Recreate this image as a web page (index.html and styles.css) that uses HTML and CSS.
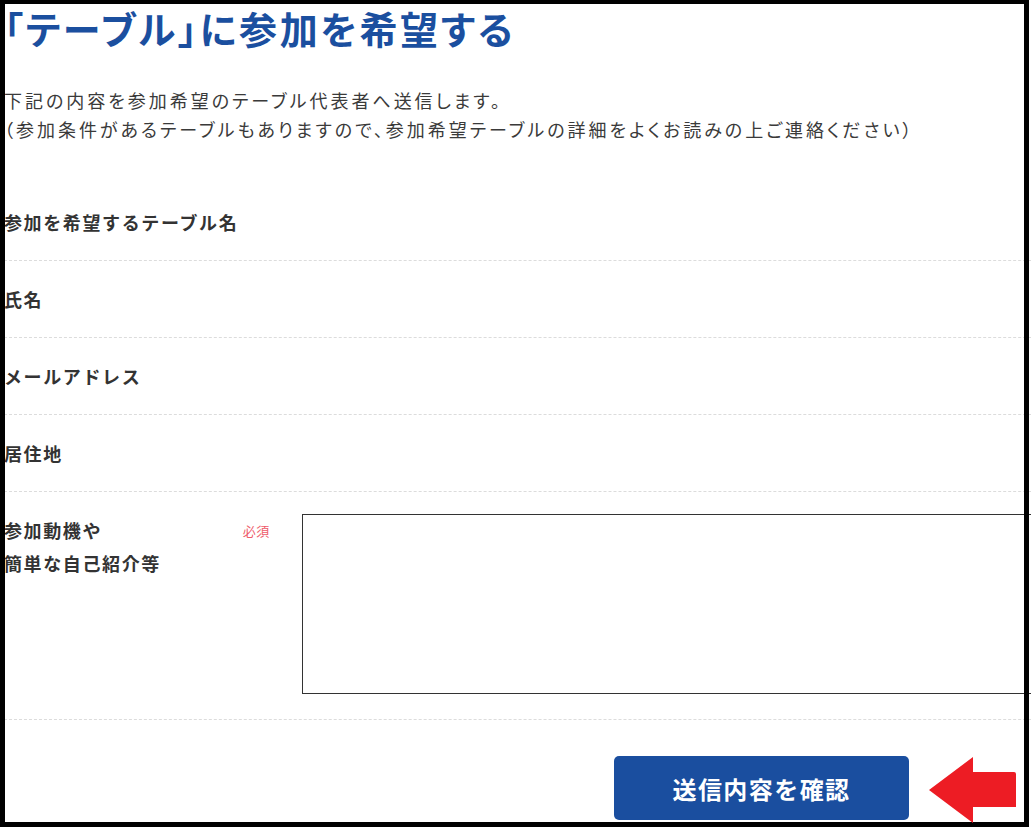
FILE: index.html
```html
<!DOCTYPE html>
<html lang="ja">
<head>
    <meta charset="UTF-8">
    <meta name="viewport" content="width=device-width, initial-scale=1.0">
    <title>テーブルに参加を希望する</title>
    <link rel="stylesheet" href="styles.css">
</head>
<body>

    <div class="page">
        <h1 class="page-title">「テーブル」に参加を希望する</h1>

        <p class="lead">
            下記の内容を参加希望のテーブル代表者へ送信します。<br>
            （参加条件があるテーブルもありますので、参加希望テーブルの詳細をよくお読みの上ご連絡ください）
        </p>

        <form class="entry-form" onsubmit="return false;">
            <div class="form-row">
                <div class="form-label">参加を希望するテーブル名</div>
                <div class="form-value"></div>
            </div>
            <div class="form-row">
                <div class="form-label">氏名</div>
                <div class="form-value"></div>
            </div>
            <div class="form-row">
                <div class="form-label">メールアドレス</div>
                <div class="form-value"></div>
            </div>
            <div class="form-row">
                <div class="form-label">居住地</div>
                <div class="form-value"></div>
            </div>
            <div class="form-row form-row-tall">
                <div class="form-label">
                    <span>参加動機や<br>簡単な自己紹介等</span>
                    <span class="required">必須</span>
                </div>
                <div class="form-value">
                    <textarea class="message" name="message"></textarea>
                </div>
            </div>

            <div class="form-actions">
                <div></div>
                <div class="form-value">
                    <button type="submit" class="submit-btn">送信内容を確認</button>
                </div>
            </div>
        </form>
    </div>

    <!-- annotation: frame and arrow drawn over the screenshot -->
    <div class="frame"></div>
    <svg class="pointer" width="90" height="70" viewBox="0 0 90 70">
        <path d="M0 34 L44 1 L44 16 L85 16 Q87 16 87 18 L87 51 L44 51 L44 67 Z" fill="#ed1c24"/>
    </svg>

</body>
</html>
```

FILE: styles.css
```css
* {
    margin: 0;
    padding: 0;
    box-sizing: border-box;
}

html, body {
    overflow: hidden;
}

body {
    font-family: "Noto Sans CJK JP", "Noto Sans", sans-serif;
    background-color: #ffffff;
    color: #333333;
    width: 1031px;
    height: 829px;
    position: relative;
}

.page {
    padding-left: 4px;
}

.page-title {
    margin-top: 4px;
    font-size: 38px;
    line-height: 48px;
    font-weight: 700;
    color: #1b4f9f;
    letter-spacing: 0.07em;
    font-feature-settings: "palt";
}

.lead {
    margin-top: 34px;
    font-size: 18px;
    line-height: 29px;
    font-weight: 400;
    letter-spacing: 0.165em;
    color: #3a3a3a;
    font-feature-settings: "palt";
}

.entry-form {
    width: 1217px;
    margin-top: 40px;
}

.form-row {
    display: grid;
    grid-template-columns: 298px 1fr;
    padding: 24px 0;
    border-bottom: 1px dashed #dcdcdc;
}

.form-label {
    font-size: 18px;
    line-height: 28px;
    font-weight: 700;
    letter-spacing: 0.09em;
    color: #333333;
}

.form-row-tall {
    padding: 22px 0 25px;
}

.form-row-tall .form-label {
    display: flex;
    justify-content: space-between;
    align-items: flex-start;
    padding-right: 32px;
    line-height: 33px;
}

.required {
    font-size: 13px;
    line-height: 34px;
    font-weight: 400;
    letter-spacing: 0.05em;
    color: #ee5b6a;
}

.message {
    display: block;
    width: 100%;
    height: 180px;
    border: 1px solid #333333;
    resize: none;
}

.form-actions {
    display: grid;
    grid-template-columns: 298px 1fr;
    padding-top: 36px;
}

.form-actions .form-value {
    display: flex;
    justify-content: center;
}

.submit-btn {
    width: 295px;
    height: 64px;
    background-color: #1a4e9f;
    color: white;
    border: none;
    border-radius: 5px;
    font-family: inherit;
    font-size: 24px;
    font-weight: 700;
    letter-spacing: 0.06em;
    cursor: pointer;
}

.frame {
    position: absolute;
    left: 0;
    top: 0;
    width: 1029px;
    height: 827px;
    border: 5px solid #000000;
    border-top-width: 4px;
    pointer-events: none;
}

.pointer {
    position: absolute;
    left: 929px;
    top: 756px;
}
```
